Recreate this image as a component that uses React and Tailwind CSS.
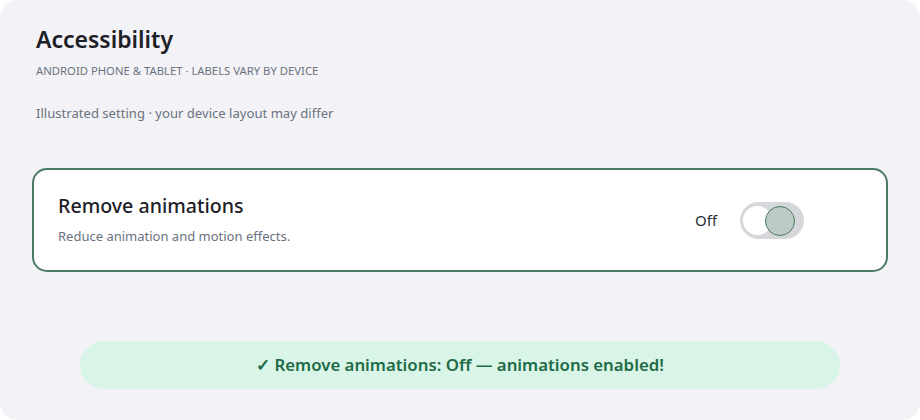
export default function App() {
  return (
    <div className="w-[920px] h-[420px] bg-white">
      <div
        className="w-full h-full rounded-[18px] bg-[#f2f2f7] px-8 pt-[25px] flex flex-col"
        style={{ fontFamily: '"Noto Sans", "Open Sans", sans-serif' }}
      >
        <div className="px-1">
          <h1 className="text-[23px] leading-[28px] font-semibold text-[#1d2027]">Accessibility</h1>
          <p className="mt-[11px] text-[11.3px] leading-[14px] text-[#6b7280] uppercase">
            Android phone &amp; tablet · Labels vary by device
          </p>
          <p className="mt-[26px] text-[13.1px] leading-[18px] text-[#6b7280]">
            Illustrated setting · your device layout may differ
          </p>
        </div>

        <div className="mt-[46px] h-[104px] rounded-[15px] border-2 border-[#4a7a62] bg-white flex items-center justify-between pl-[24px] pr-[82px]">
          <div className="flex flex-col -mt-[2px]">
            <span className="text-[19.6px] leading-[24px] font-medium text-[#1d2027]">Remove animations</span>
            <span className="mt-[10px] text-[13px] leading-[16px] text-[#6b7280]">
              Reduce animation and motion effects.
            </span>
          </div>
          <div className="flex items-center gap-[23px]">
            <span className="text-[15px] text-[#2a2d33]">Off</span>
            <div className="relative w-[64px] h-[37px] rounded-full bg-[#d6d7db]">
              <div className="absolute left-[3px] top-[4px] w-[29px] h-[29px] rounded-full bg-white" />
              <div className="absolute left-[25px] top-[4px] w-[30px] h-[30px] rounded-full bg-[#bccbc3] border-[1.5px] border-[#4a7a62]" />
            </div>
          </div>
        </div>

        <div className="mt-[69px] mx-12 h-[48px] rounded-full bg-[#d9f5e7] flex items-center justify-center">
          <span className="text-[16.8px] font-semibold text-[#1f6b48]">
            ✓ Remove animations: Off — animations enabled!
          </span>
        </div>
      </div>
    </div>
  );
}
